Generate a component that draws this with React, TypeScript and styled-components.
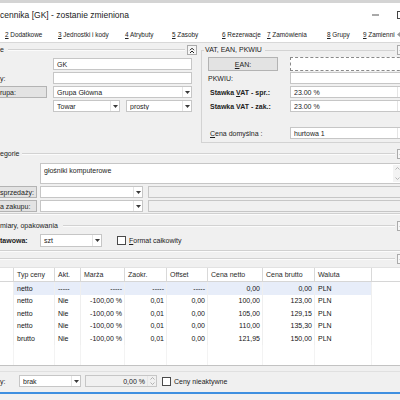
import React from "react";
import styled, { createGlobalStyle } from "styled-components";

const GlobalStyle = createGlobalStyle`
  html, body { margin: 0; padding: 0; width: 400px; height: 400px; overflow: hidden; background: #f0f0f0; }
  body { font-family: "Liberation Sans", Arial, sans-serif; font-size: 7px; color: #1c1c1c; }
  *, *::before, *::after { box-sizing: border-box; }
  #root { width: 400px; height: 400px; overflow: hidden; }
`;

const Window = styled.div`
  width: 400px;
  height: 400px;
  overflow: hidden;
  display: flex;
  flex-direction: column;
  background: #f0f0f0;
`;

const TitleBar = styled.div`
  flex: none;
  width: 414px;
  height: 26px;
  border-top: 3px solid #d4d4d4;
  background: #fff;
  display: flex;
  align-items: center;
  font-size: 8.5px;
  color: #1a1a1a;
`;

const TitleText = styled.div`
  flex: 1;
  white-space: nowrap;
`;

const ControlButton = styled.div`
  width: 26px;
  height: 100%;
  display: flex;
  align-items: center;
  justify-content: center;
`;

const TabStrip = styled.div`
  flex: none;
  width: 414px;
  height: 16px;
  background: #fff;
  display: flex;
  align-items: center;
  padding-left: 5px;
  white-space: nowrap;
  font-size: 6.4px;
`;

const Tab = styled.div<{ $w: number }>`
  flex: none;
  width: ${(p) => p.$w}px;
  color: #222;
`;

const U = styled.span`
  text-decoration: underline;
`;

const TabScroll = styled.div`
  flex: none;
  width: 10px;
  display: flex;
  align-items: center;
`;

const Content = styled.div`
  flex: none;
  width: 410px;
  border-top: 1px solid #d8d8d8;
  display: flex;
  flex-direction: column;
`;

const TopSection = styled.div`
  flex: none;
  height: 100px;
  display: grid;
  grid-template-columns: 197px 1fr;
  column-gap: 4px;
`;

const LeftPanel = styled.div`
  display: flex;
  flex-direction: column;
  padding-top: 2px;
`;

const SectionHeader = styled.div<{ $mt?: number; $pr?: number }>`
  flex: none;
  display: flex;
  align-items: center;
  height: 10px;
  margin-top: ${(p) => p.$mt ?? 0}px;
  padding-right: ${(p) => p.$pr ?? 0}px;
`;

const SectionTitle = styled.span<{ $gap: number }>`
  white-space: nowrap;
  padding-right: ${(p) => p.$gap}px;
  line-height: 10px;
  color: #222;
`;

const SectionLine = styled.div`
  flex: 1;
  height: 2px;
  border-top: 1px solid #d2d2d2;
  border-bottom: 1px solid #fbfbfb;
`;

const CollapseBtn = styled.div`
  flex: none;
  width: 10px;
  height: 10px;
  margin-left: 2px;
  border: 1px solid #ababab;
  background: #f6f6f6;
  display: flex;
  align-items: center;
  justify-content: center;
`;

const FormRow = styled.div<{ $mt: number }>`
  flex: none;
  display: grid;
  grid-template-columns: 47px 139px;
  column-gap: 6px;
  height: 12px;
  margin-top: ${(p) => p.$mt}px;
`;

const PlainLabel = styled.div<{ $bold?: boolean; $pl?: number; $w?: number }>`
  flex: none;
  width: ${(p) => (p.$w ? `${p.$w}px` : "auto")};
  display: flex;
  align-items: center;
  white-space: nowrap;
  font-weight: ${(p) => (p.$bold ? 700 : 400)};
  padding-left: ${(p) => p.$pl ?? 0}px;
  color: #1c1c1c;
`;

const LabelButton = styled.div<{ $w?: number; $cut?: boolean; $center?: boolean }>`
  flex: none;
  width: ${(p) => (p.$w ? `${p.$w}px` : "auto")};
  height: 100%;
  background: #e3e3e3;
  border: 1px solid #b3b3b3;
  border-left: ${(p) => (p.$cut ? "none" : "1px solid #b3b3b3")};
  display: flex;
  align-items: center;
  justify-content: ${(p) => (p.$center ? "center" : "flex-start")};
  white-space: nowrap;
  overflow: hidden;
`;

const Field = styled.div<{ $w?: number; $gray?: boolean; $dashed?: boolean; $ml?: number; $right?: boolean }>`
  flex: ${(p) => (p.$w ? "none" : "1")};
  width: ${(p) => (p.$w ? `${p.$w}px` : "auto")};
  height: 100%;
  margin-left: ${(p) => p.$ml ?? 0}px;
  background: ${(p) => (p.$gray ? "#f0f0f0" : "#fff")};
  border: 1px ${(p) => (p.$dashed ? "dashed #8a8a8a" : "solid #c6c6c6")};
  display: flex;
  align-items: center;
  justify-content: ${(p) => (p.$right ? "flex-end" : "flex-start")};
  padding-left: 3px;
  white-space: nowrap;
  overflow: hidden;
  min-width: 0;
`;

const FieldText = styled.span`
  flex: 1;
  overflow: hidden;
`;

const ArrowBox = styled.div`
  flex: none;
  width: 9px;
  height: 100%;
  border-left: 1px solid #e4e4e4;
  display: flex;
  align-items: center;
  justify-content: center;
`;

const SplitPair = styled.div`
  display: flex;
  gap: 6px;
`;

const GroupBox = styled.div`
  margin-top: 3px;
  display: flex;
  flex-direction: column;
  height: 97px;
`;

const GroupHeader = styled.div`
  flex: none;
  display: flex;
  height: 8px;
  padding-right: 3px;
`;

const GroupCorner = styled.div`
  flex: none;
  width: 3px;
  margin-top: 4px;
  border-top: 1px solid #d3d3d3;
  border-left: 1px solid #d3d3d3;
`;

const GroupLegend = styled.span`
  padding: 0 3px 0 1px;
  line-height: 8px;
  white-space: nowrap;
  color: #222;
`;

const GroupLine = styled.div`
  flex: 1;
  margin-top: 4px;
  border-top: 1px solid #d3d3d3;
`;

const GroupHeaderBtn = styled(CollapseBtn)`
  margin-top: -1px;
`;

const GroupBody = styled.div`
  flex: 1;
  border-left: 1px solid #d3d3d3;
  border-bottom: 1px solid #d3d3d3;
  padding: 3px 0 3px 6px;
  display: flex;
  flex-direction: column;
`;

const RightRow = styled.div<{ $h?: number; $mt?: number }>`
  flex: none;
  display: grid;
  grid-template-columns: 70px 1fr;
  column-gap: 12px;
  height: ${(p) => p.$h ?? 12}px;
  margin-top: ${(p) => p.$mt ?? 0}px;
`;

const RightFieldCell = styled.div`
  display: flex;
  height: 100%;
`;

const TextAreaRow = styled.div`
  flex: none;
  height: 21px;
  margin-top: 4px;
  padding-left: 40px;
  display: flex;
`;

const TextArea = styled.div`
  flex: 1;
  background: #fff;
  border: 1px solid #c6c6c6;
  display: flex;
  padding: 3px 0 0 3px;
`;

const ScrollStrip = styled.div`
  flex: none;
  width: 8px;
  margin: -2px 8px 1px 0;
  background: #f3f3f3;
  display: flex;
  flex-direction: column;
  align-items: center;
  justify-content: space-between;
  padding: 2px 0;
`;

const LineRow = styled.div<{ $mt: number; $h?: number }>`
  flex: none;
  display: flex;
  align-items: stretch;
  height: ${(p) => p.$h ?? 12}px;
  margin-top: ${(p) => p.$mt}px;
`;

const Separator = styled.div<{ $mt: number }>`
  flex: none;
  height: 2px;
  margin-top: ${(p) => p.$mt}px;
  border-top: 1px solid #d0d0d0;
  border-bottom: 1px solid #fbfbfb;
`;

const CheckBox = styled.div<{ $ml: number }>`
  flex: none;
  width: 9px;
  height: 9px;
  margin-left: ${(p) => p.$ml}px;
  align-self: center;
  border: 1px solid #4a4a4a;
  background: #fff;
`;

const CheckLabel = styled.span`
  align-self: center;
  margin-left: 3px;
  white-space: nowrap;
`;

const COLS = "14px 41px 26px 44px 42px 41px 55px 52px 57px 38px";

const Table = styled.div`
  flex: none;
  height: 98px;
  margin-top: 3px;
  background: #fff;
  display: flex;
  flex-direction: column;
`;

const HeaderRow = styled.div`
  flex: none;
  display: grid;
  grid-template-columns: ${COLS};
  height: 15px;
  border-bottom: 1px solid #d6d6d6;
  border-top: 1px solid #e2e2e2;
`;

const HeaderCell = styled.div`
  border-right: 1px solid #d9d9d9;
  display: flex;
  align-items: center;
  padding-left: 3px;
  white-space: nowrap;
  overflow: hidden;
  color: #2a2a2a;
`;

const BodyRow = styled.div`
  flex: none;
  display: grid;
  grid-template-columns: ${COLS};
  height: 12.5px;
`;

const BodyCell = styled.div<{ $right?: boolean; $hl?: boolean }>`
  border-right: 1px solid #efefef;
  background: ${(p) => (p.$hl ? "#e7edf9" : "transparent")};
  display: flex;
  align-items: center;
  justify-content: ${(p) => (p.$right ? "flex-end" : "flex-start")};
  padding: ${(p) => (p.$right ? "0 2px 0 0" : "0 0 0 3px")};
  white-space: nowrap;
  overflow: hidden;
  color: #151515;
`;

const TableFiller = styled.div`
  flex: 1;
  display: grid;
  grid-template-columns: ${COLS};
`;

const FillerCell = styled.div`
  border-right: 1px solid #f3f3f3;
`;

const BottomBar = styled.div`
  flex: none;
  border-top: 1px solid #c2c2c2;
  padding-top: 5px;
`;

const BottomInner = styled.div`
  border-top: 1px solid #e0e0e0;
  padding: 3px 0 5px 0;
`;

const BlueLine = styled.div`
  flex: none;
  height: 2px;
  background: #3e8fe0;
`;

const SpinBox = styled.div`
  flex: none;
  width: 9px;
  height: 100%;
  margin-left: 2px;
  border-left: 1px solid #e6e6e6;
  display: flex;
  flex-direction: column;
  align-items: center;
  justify-content: space-around;
`;

/* ---------- icons ---------- */

const DownTri = () => (
  <svg width="5" height="3" viewBox="0 0 5 3">
    <path d="M0 0h5L2.5 3z" fill="#3a3a3a" />
  </svg>
);

const DoubleUp = () => (
  <svg width="6" height="7" viewBox="0 0 6 7">
    <path d="M1 3.2 3 1.2 5 3.2M1 6 3 4 5 6" fill="none" stroke="#222" strokeWidth="1" />
  </svg>
);

const Chevron = ({ up, color = "#b0b0b0" }: { up?: boolean; color?: string }) => (
  <svg width="5" height="3" viewBox="0 0 5 3">
    <path d={up ? "M0.5 2.5 2.5 0.5 4.5 2.5" : "M0.5 0.5 2.5 2.5 4.5 0.5"} fill="none" stroke={color} strokeWidth="0.9" />
  </svg>
);

const Combo = ({ text, w, ml }: { text: string; w?: number; ml?: number }) => (
  <Field $w={w} $ml={ml}>
    <FieldText>{text}</FieldText>
    <ArrowBox>
      <DownTri />
    </ArrowBox>
  </Field>
);

/* ---------- data ---------- */

type Row = { typ: string; akt: string; marza: string; zaokr: string; offset: string; netto: string; brutto: string; hl?: boolean };

const rows: Row[] = [
  { typ: "netto", akt: "-----", marza: "-----", zaokr: "-----", offset: "-----", netto: "0,00", brutto: "0,00", hl: true },
  { typ: "netto", akt: "Nie", marza: "-100,00 %", zaokr: "0,01", offset: "0,00", netto: "100,00", brutto: "123,00" },
  { typ: "netto", akt: "Nie", marza: "-100,00 %", zaokr: "0,01", offset: "0,00", netto: "105,00", brutto: "129,15" },
  { typ: "netto", akt: "Nie", marza: "-100,00 %", zaokr: "0,01", offset: "0,00", netto: "110,00", brutto: "135,30" },
  { typ: "brutto", akt: "Nie", marza: "-100,00 %", zaokr: "0,01", offset: "0,00", netto: "121,95", brutto: "150,00" },
];

const tabs: { n: string; label: string; w: number }[] = [
  { n: "2", label: " Dodatkowe", w: 53 },
  { n: "3", label: " Jednostki i kody", w: 67 },
  { n: "4", label: " Atrybuty", w: 47 },
  { n: "5", label: " Zasoby", w: 50 },
  { n: "6", label: " Rezerwacje", w: 45 },
  { n: "7", label: " Zamówienia", w: 60 },
  { n: "8", label: " Grupy", w: 36 },
  { n: "9", label: " Zamienni", w: 34 },
];

export default function App() {
  return (
    <>
      <GlobalStyle />
      <Window>
        <TitleBar>
          <TitleText>cennika [GK] - zostanie zmieniona</TitleText>
          <ControlButton>
            <svg width="7" height="2" viewBox="0 0 7 2">
              <rect x="0" y="0.5" width="7" height="1" fill="#555" />
            </svg>
          </ControlButton>
          <ControlButton>
            <svg width="8" height="8" viewBox="0 0 8 8">
              <rect x="0.5" y="0.5" width="7" height="7" fill="none" stroke="#444" strokeWidth="1" />
            </svg>
          </ControlButton>
        </TitleBar>

        <TabStrip>
          {tabs.map((t) => (
            <Tab key={t.n} $w={t.w}>
              <U>{t.n}</U>
              {t.label}
            </Tab>
          ))}
          <TabScroll>
            <svg width="3" height="5" viewBox="0 0 3 5">
              <path d="M3 0v5L0 2.5z" fill="#9a9a9a" />
            </svg>
          </TabScroll>
        </TabStrip>

        <Content>
          <TopSection>
            <LeftPanel>
              <SectionHeader>
                <SectionTitle $gap={4}>e</SectionTitle>
                <SectionLine />
                <CollapseBtn>
                  <DoubleUp />
                </CollapseBtn>
              </SectionHeader>
              <FormRow $mt={3}>
                <PlainLabel />
                <Field>GK</Field>
              </FormRow>
              <FormRow $mt={2}>
                <PlainLabel>
                  <span>y:</span>
                </PlainLabel>
                <Field />
              </FormRow>
              <FormRow $mt={2}>
                <LabelButton $cut>rupa:</LabelButton>
                <Combo text="Grupa Główna" />
              </FormRow>
              <FormRow $mt={2}>
                <PlainLabel />
                <SplitPair>
                  <Combo text="Towar" w={67} />
                  <Combo text="prosty" w={66} />
                </SplitPair>
              </FormRow>
            </LeftPanel>

            <GroupBox>
              <GroupHeader>
                <GroupCorner />
                <GroupLegend>VAT, EAN, PKWIU</GroupLegend>
                <GroupLine />
                <GroupHeaderBtn>
                  <DoubleUp />
                </GroupHeaderBtn>
              </GroupHeader>
              <GroupBody>
                <RightRow $h={14}>
                  <LabelButton $center>
                    <span>
                      <U>E</U>AN:
                    </span>
                  </LabelButton>
                  <RightFieldCell>
                    <Field $dashed />
                  </RightFieldCell>
                </RightRow>
                <RightRow $mt={1}>
                  <PlainLabel>
                    <span>PKWIU:</span>
                  </PlainLabel>
                  <RightFieldCell>
                    <Field />
                  </RightFieldCell>
                </RightRow>
                <RightRow $mt={2}>
                  <PlainLabel $bold $pl={2}>
                    <span>
                      Stawka <U>V</U>AT - spr.:
                    </span>
                  </PlainLabel>
                  <RightFieldCell>
                    <Combo text="23.00 %" w={117} />
                  </RightFieldCell>
                </RightRow>
                <RightRow $mt={2}>
                  <PlainLabel $bold $pl={2}>
                    <span>Stawka VAT - zak.:</span>
                  </PlainLabel>
                  <RightFieldCell>
                    <Combo text="23.00 %" w={117} />
                  </RightFieldCell>
                </RightRow>
                <RightRow $mt={15}>
                  <PlainLabel $pl={2}>
                    <span>
                      <U>C</U>ena domyślna :
                    </span>
                  </PlainLabel>
                  <RightFieldCell>
                    <Combo text="hurtowa 1" w={117} />
                  </RightFieldCell>
                </RightRow>
              </GroupBody>
            </GroupBox>
          </TopSection>

          <SectionHeader $mt={6} $pr={3}>
            <SectionTitle $gap={3}>egorie</SectionTitle>
            <SectionLine />
            <CollapseBtn>
              <DoubleUp />
            </CollapseBtn>
          </SectionHeader>

          <TextAreaRow>
            <TextArea>
              <FieldText>głośniki komputerowe</FieldText>
              <ScrollStrip>
                <Chevron up />
                <Chevron />
              </ScrollStrip>
            </TextArea>
          </TextAreaRow>

          <LineRow $mt={2}>
            <LabelButton $w={37} $cut>
              sprzedaży:
            </LabelButton>
            <Combo text="" w={103} ml={3} />
            <Field $gray $ml={5} />
          </LineRow>
          <LineRow $mt={2}>
            <LabelButton $w={37} $cut>
              a zakupu:
            </LabelButton>
            <Combo text="" w={103} ml={3} />
            <Field $gray $ml={5} />
          </LineRow>

          <Separator $mt={1} />

          <SectionHeader $mt={6} $pr={3}>
            <SectionTitle $gap={5}>miary, opakowania</SectionTitle>
            <SectionLine />
            <CollapseBtn>
              <DoubleUp />
            </CollapseBtn>
          </SectionHeader>

          <LineRow $mt={3} $h={13}>
            <PlainLabel $bold $w={40}>
              <span>tawowa:</span>
            </PlainLabel>
            <Combo text="szt" w={62} />
            <CheckBox $ml={15} />
            <CheckLabel>
              <U>F</U>ormat całkowity
            </CheckLabel>
          </LineRow>

          <Separator $mt={3} />

          <SectionHeader $mt={2} $pr={3}>
            <SectionLine />
            <CollapseBtn>
              <DoubleUp />
            </CollapseBtn>
          </SectionHeader>

          <Table>
            <HeaderRow>
              <HeaderCell />
              <HeaderCell>Typ ceny</HeaderCell>
              <HeaderCell>Akt.</HeaderCell>
              <HeaderCell>Marża</HeaderCell>
              <HeaderCell>Zaokr.</HeaderCell>
              <HeaderCell>Offset</HeaderCell>
              <HeaderCell>Cena netto</HeaderCell>
              <HeaderCell>Cena brutto</HeaderCell>
              <HeaderCell>Waluta</HeaderCell>
              <HeaderCell />
            </HeaderRow>
            {rows.map((r, i) => (
              <BodyRow key={i}>
                <BodyCell />
                <BodyCell $hl={r.hl}>{r.typ}</BodyCell>
                <BodyCell $hl={r.hl}>{r.akt}</BodyCell>
                <BodyCell $hl={r.hl} $right>
                  {r.marza}
                </BodyCell>
                <BodyCell $hl={r.hl} $right>
                  {r.zaokr}
                </BodyCell>
                <BodyCell $hl={r.hl} $right>
                  {r.offset}
                </BodyCell>
                <BodyCell $hl={r.hl} $right>
                  {r.netto}
                </BodyCell>
                <BodyCell $hl={r.hl} $right>
                  {r.brutto}
                </BodyCell>
                <BodyCell $hl={r.hl}>PLN</BodyCell>
                <BodyCell />
              </BodyRow>
            ))}
            <TableFiller>
              {Array.from({ length: 10 }).map((_, i) => (
                <FillerCell key={i} />
              ))}
            </TableFiller>
          </Table>

          <BottomBar>
            <BottomInner>
              <LineRow $mt={0}>
                <PlainLabel $w={19}>
                  <span>y:</span>
                </PlainLabel>
                <Combo text="brak" w={62} />
                <Field $w={72} $gray $ml={4} $right>
                  <span>0,00 %</span>
                  <SpinBox>
                    <Chevron up color="#a8a8a8" />
                    <Chevron color="#a8a8a8" />
                  </SpinBox>
                </Field>
                <CheckBox $ml={5} />
                <CheckLabel>Ceny nieaktywne</CheckLabel>
              </LineRow>
            </BottomInner>
          </BottomBar>
          <BlueLine />
        </Content>
      </Window>
    </>
  );
}
